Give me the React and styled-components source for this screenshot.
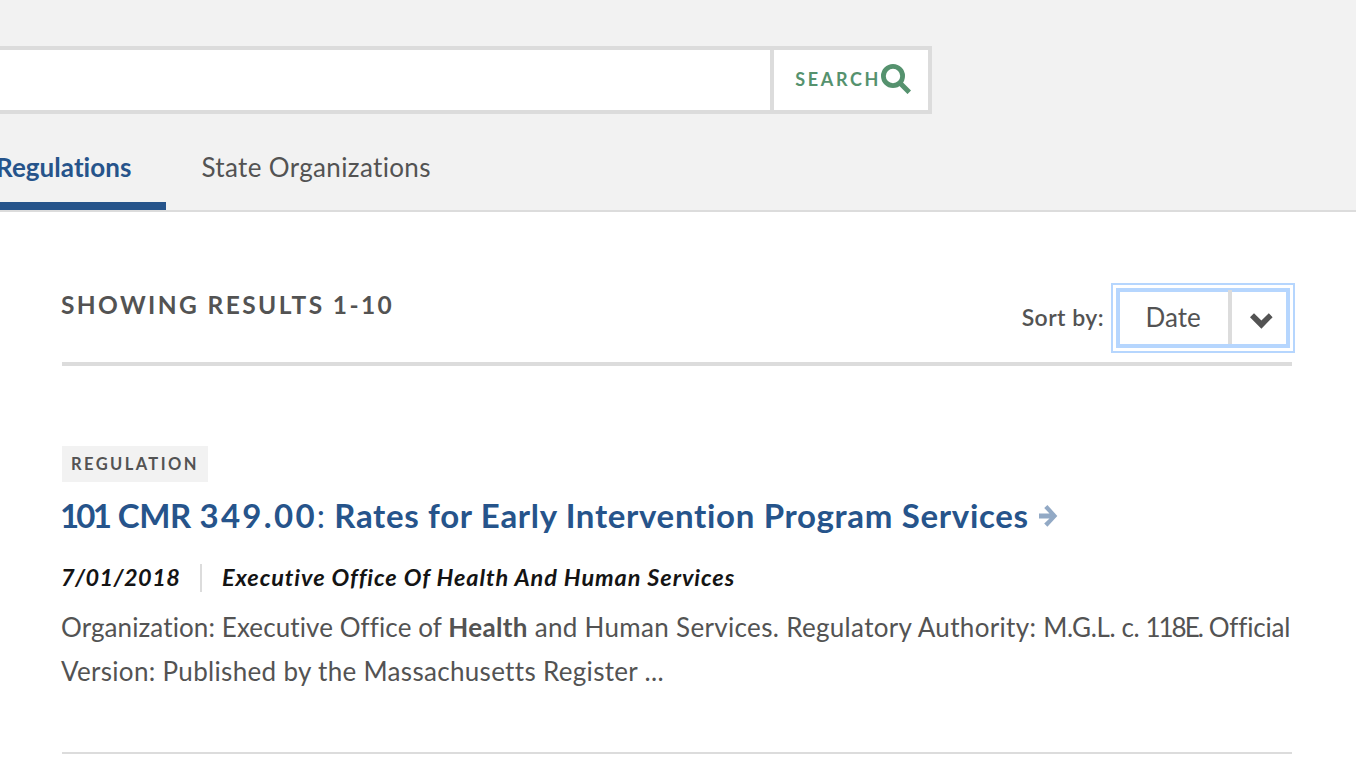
import React from "react";
import styled, { createGlobalStyle } from "styled-components";

const color = {
  blue: "#26548b",
  green: "#55926e",
  text: "#535353",
  ink: "#141414",
  rule: "#dcdcdc",
  panel: "#f2f2f2",
  focus: "#b6d6fe",
};

const GlobalStyle = createGlobalStyle`
  *, *::before, *::after { box-sizing: border-box; }
  body {
    margin: 0;
    background: #fff;
    color: ${color.text};
    font-family: Lato, "Liberation Sans", sans-serif;
    font-size: 26px;
    font-variant-ligatures: none;
    overflow: hidden;
  }
`;

const Page = styled.div`
  width: 1356px;
  height: 768px;
  overflow: hidden;
`;

const Header = styled.header`
  display: flex;
  flex-direction: column;
  justify-content: space-between;
  height: 212px;
  padding-top: 46px;
  background: ${color.panel};
  border-bottom: 2px solid ${color.rule};
`;

const SearchForm = styled.form`
  display: flex;
  width: 932px;
  height: 68px;
  border: 4px solid ${color.rule};
  border-left: 0;
  background: #fff;
`;

const SearchInput = styled.input`
  flex: 1;
  min-width: 0;
  border: 0;
  padding: 0 20px;
  background: transparent;
  font: inherit;
  outline: none;
`;

const SearchButton = styled.button`
  display: flex;
  align-items: center;
  justify-content: flex-end;
  width: 158px;
  padding: 0 17px 2px 0;
  border: 0;
  border-left: 4px solid ${color.rule};
  background: transparent;
  color: ${color.green};
  font: 700 18px/24px Lato, sans-serif;
  letter-spacing: 2.65px;
`;

const SearchIcon = styled.svg`
  flex: none;
  width: 30px;
  height: 30px;
`;

const Tabs = styled.nav`
  display: flex;
  height: 86px;
`;

const Tab = styled.a`
  padding: 27px 35px 0;
  line-height: 32px;
  letter-spacing: ${(p) => (p.$active ? "0.05px" : "0.35px")};
  font-weight: ${(p) => (p.$active ? 700 : 400)};
  color: ${(p) => (p.$active ? color.blue : color.text)};
  border-bottom: ${(p) => (p.$active ? `8px solid ${color.blue}` : "0")};
  margin-left: ${(p) => (p.$active ? "-39px" : "0")};
  white-space: nowrap;
`;

const Results = styled.main`
  width: 1230px;
  margin-left: 62px;
`;

const ResultsHeader = styled.div`
  display: flex;
  justify-content: space-between;
  height: 154px;
  padding-top: 71px;
  border-bottom: 4px solid ${color.rule};
`;

const Showing = styled.h2`
  margin: 7px 0 0 -1px;
  font-size: 24.5px;
  line-height: 30px;
  font-weight: 700;
  letter-spacing: 2.4px;
`;

const SortGroup = styled.div`
  display: flex;
  align-items: flex-start;
  margin-right: -3px;
`;

const SortLabel = styled.label`
  margin: 20px 7px 0 0;
  font-size: 23px;
  line-height: 28px;
  font-weight: 600;
  letter-spacing: 0.45px;
`;

const SortSelect = styled.div`
  display: flex;
  width: 184px;
  height: 70px;
  padding: 3px;
  border: 2px solid ${color.focus};
`;

const SortFrame = styled.div`
  display: flex;
  flex: 1;
  height: 60px;
  border: 4px solid ${color.focus};
`;

const SortValue = styled.span`
  width: 108px;
  padding-left: 25.5px;
  line-height: 50px;
`;

const SortToggle = styled.span`
  flex: 1;
  margin-top: -2px;
  padding: 23px 0 0 18px;
  border-left: 4px solid ${color.rule};
`;

const ChevronIcon = styled.svg`
  display: block;
  width: 23px;
  height: 16px;
`;

const Result = styled.article`
  height: 388px;
  padding-top: 80px;
  border-bottom: 2px solid ${color.rule};
`;

const Tag = styled.div`
  width: 146px;
  height: 36px;
  padding-left: 9px;
  background: ${color.panel};
  font-size: 16.5px;
  line-height: 36px;
  font-weight: 700;
  letter-spacing: 2.4px;
`;

const Title = styled.h3`
  display: flex;
  align-items: center;
  margin: 13px 0 0 -2px;
  color: ${color.blue};
  font-size: 33px;
  line-height: 40px;
  font-weight: 700;
  letter-spacing: 0.68px;
  white-space: nowrap;
`;

const Tracked = styled.span`
  letter-spacing: ${(p) => p.$by}px;
  font-weight: ${(p) => p.$weight || "inherit"};
`;

const ArrowIcon = styled.svg`
  flex: none;
  width: 19px;
  height: 22px;
  margin: 2px 0 0 10.6px;
`;

const Meta = styled.div`
  display: flex;
  height: 28px;
  margin-top: 29px;
  color: ${color.ink};
  font-size: 23.5px;
  line-height: 26px;
  font-style: italic;
  font-weight: 700;
`;

const MetaDate = styled.span`
  width: 139px;
  margin-left: -1px;
  letter-spacing: 0.4px;
`;

const MetaOrg = styled.span`
  padding-left: 20px;
  border-left: 2px solid ${color.rule};
  letter-spacing: 0.9px;
  white-space: nowrap;
`;

const Summary = styled.p`
  width: 1240px;
  margin: 13px 0 0 -1px;
  line-height: 44px;
  letter-spacing: 0.32px;
`;

export default function App() {
  return (
    <Page>
      <GlobalStyle />
      <Header>
        <SearchForm>
          <SearchInput aria-label="Search" />
          <SearchButton type="button">
            SEARCH
            <SearchIcon viewBox="0 0 30 30" fill="none" stroke="currentColor">
              <circle cx="12" cy="12" r="9.6" strokeWidth="4.8" />
              <path d="M18.2 18.2L28.3 28.3" strokeWidth="5" />
            </SearchIcon>
          </SearchButton>
        </SearchForm>
        <Tabs>
          <Tab $active>Regulations</Tab>
          <Tab>State Organizations</Tab>
        </Tabs>
      </Header>
      <Results>
        <ResultsHeader>
          <Showing>SHOWING RESULTS 1-10</Showing>
          <SortGroup>
            <SortLabel>Sort by:</SortLabel>
            <SortSelect>
              <SortFrame>
                <SortValue>Date</SortValue>
                <SortToggle>
                  <ChevronIcon viewBox="0 0 23 16" fill="currentColor">
                    <path d="M0 4.2L4 .2L11.4 7.4L18.8 .2L22.6 4.2L11.4 15.8Z" />
                  </ChevronIcon>
                </SortToggle>
              </SortFrame>
            </SortSelect>
          </SortGroup>
        </ResultsHeader>
        <Result>
          <Tag>REGULATION</Tag>
          <Title>
            <span>
              <Tracked $by={-2.8}>101</Tracked> <Tracked $by={-0.4}>CMR</Tracked>{" "}
              <Tracked $by={2.3}>349.00</Tracked>
              <Tracked $by={0.5} $weight={400}>:</Tracked> Rates for Early Intervention Program Services
            </span>
            <ArrowIcon viewBox="0 0 19 22" fill={color.blue} fillOpacity="0.5">
              <path d="M0 8.4H10.5L5.2 3L8.4 0L18.3 10.9L8.4 21.8L5.2 18.6L10.5 13.4H0Z" />
            </ArrowIcon>
          </Title>
          <Meta>
            <MetaDate>7/01/2018</MetaDate>
            <MetaOrg>Executive Office Of Health And Human Services</MetaOrg>
          </Meta>
          <Summary>
            <Tracked $by={0.1}>Organization: Executive Office of </Tracked>
            <strong>Health</strong> and Human Services. Regulatory Authority:{" "}
            <Tracked $by={-0.4}>M.G.L. c. </Tracked>
            <Tracked $by={-2}>118E.</Tracked> <Tracked $by={-0.2}>Official</Tracked> Version: Published by
            the Massachusetts Register ...
          </Summary>
        </Result>
      </Results>
    </Page>
  );
}
